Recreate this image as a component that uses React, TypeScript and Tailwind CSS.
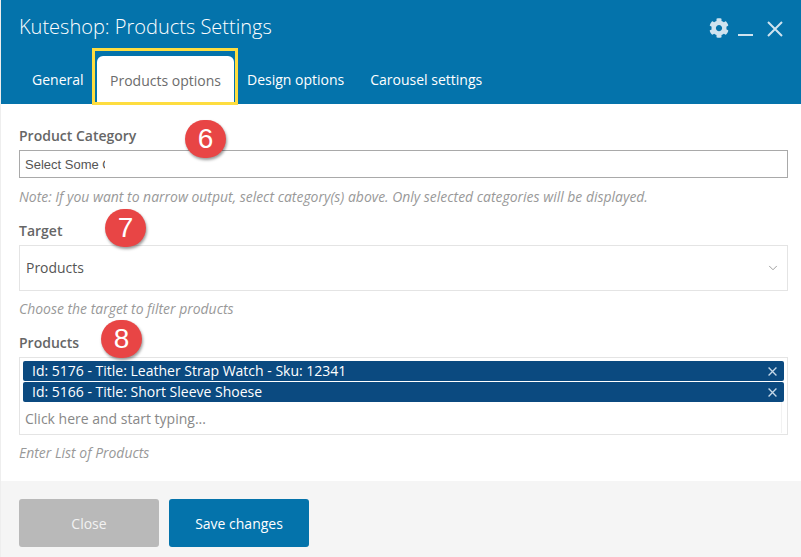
import { ChevronDown } from "lucide-react";
import { FaCog } from "react-icons/fa";

const font = "font-['Open_Sans',sans-serif]";

function Cross({ size, width, className }: { size: number; width: number; className: string }) {
  return (
    <svg width={size} height={size} viewBox="0 0 16 16" className={className} stroke="currentColor" strokeWidth={width} fill="none">
      <path d="M1 1 15 15M15 1 1 15" />
    </svg>
  );
}

function Badge({ n, className }: { n: number; className: string }) {
  return (
    <span
      className={`absolute flex h-[38px] w-[41px] items-center justify-center rounded-full bg-[#e84545] font-['Liberation_Sans',sans-serif] text-[28px] text-white shadow-[1px_2px_3px_rgba(0,0,0,0.4)] ${className}`}
    >
      {n}
    </span>
  );
}

function Tag({ text }: { text: string }) {
  return (
    <div className="flex h-[20px] items-center justify-between rounded-[2px] bg-[#0b4a80] pl-[9px] pr-[7px] text-[14px] leading-[18px] text-white">
      <span className="-mt-[1px]">{text}</span>
      <Cross size={9} width={2.4} className="text-[#c5d8e8]" />
    </div>
  );
}

export default function App() {
  return (
    <div className={`flex h-[557px] w-[801px] flex-col overflow-hidden border-l border-[#eeeeee] bg-white ${font}`}>
      <header className="h-[104px] shrink-0 bg-[#0473ab] text-white">
        <div className="flex h-[48px] items-start justify-between pl-[18px] pr-[18px] pt-[12px]">
          <h1 className="text-[20px] font-light leading-[30px]">Kuteshop: Products Settings</h1>
          <div className="flex items-start gap-[9px] pt-[6px] text-[#cfe3ef]">
            <FaCog size={20} />
            <span className="mt-[16px] h-[2px] w-[15px] bg-[#cfe3ef]" />
            <Cross size={16} width={2} className="ml-[5px] mt-[3px]" />
          </div>
        </div>
        <nav className="flex h-[56px] items-end pl-[18px] text-[14px]">
          <span className="w-[78px] pb-[14px] pl-[13px]">General</span>
          <div className="relative">
            <span className="block h-[48px] w-[137px] rounded-t-[6px] bg-white pt-[14px] text-center text-[#6c6c6c]">
              Products options
            </span>
            <span className="absolute -bottom-[1px] -left-[5px] -top-[8px] -right-[4px] border-[3px] border-[#fedd3f]" />
          </div>
          <span className="pb-[14px] pl-[13px]">Design options</span>
          <span className="pb-[14px] pl-[26px]">Carousel settings</span>
        </nav>
      </header>

      <main className="relative flex-1 pl-[18px] pr-[13px] pt-[22px] text-[13.95px]">
        <label className="block text-[14px] font-semibold leading-[19px] text-[#666666]">Product Category</label>
        <div className="mt-[5px] flex h-[28px] items-center border border-[#a9a9a9] pl-[5px] font-['Liberation_Sans',sans-serif] text-[13px] text-[#555555]">
          <span className="w-[80px] overflow-hidden whitespace-nowrap pt-[1px]">Select Some Options</span>
        </div>
        <p className="mt-[9px] italic leading-[19px] text-[#999999]">
          Note: If you want to narrow output, select category(s) above. Only selected categories will be displayed.
        </p>

        <label className="mt-[15px] block text-[14px] font-semibold leading-[19px] text-[#666666]">Target</label>
        <div className="mt-[5px] flex h-[46px] items-center justify-between border border-[#e4e4e4] pl-[6px] pr-[7px] text-[#555555]">
          <span>Products</span>
          <ChevronDown size={14} strokeWidth={1.2} className="text-[#777777]" />
        </div>
        <p className="mt-[8px] italic leading-[19px] text-[#999999]">Choose the target to filter products</p>

        <label className="mt-[15px] block text-[14px] font-semibold leading-[19px] text-[#666666]">Products</label>
        <div className="mt-[5px] h-[78px] border border-[#e4e4e4] px-[3px] pt-[3px]">
          <div className="flex flex-col gap-[1px]">
            <Tag text="Id: 5176 - Title: Leather Strap Watch - Sku: 12341" />
            <Tag text="Id: 5166 - Title: Short Sleeve Shoese" />
          </div>
          <div className="mr-[2px] flex h-[31px] items-center border-r border-[#f2f2f2] pl-[2px] text-[14px] text-[#888888]">
            <span className="mt-[1px]">Click here and start typing...</span>
          </div>
        </div>
        <p className="mt-[8px] italic leading-[19px] text-[#999999]">Enter List of Products</p>

        <Badge n={6} className="left-[184px] top-[16px]" />
        <Badge n={7} className="left-[104px] top-[105px]" />
        <Badge n={8} className="left-[100px] top-[216px]" />
      </main>

      <footer className="flex h-[76px] shrink-0 gap-[10px] bg-[#f5f5f5] pl-[18px] pt-[18px] text-[14px]">
        <button type="button" className="h-[48px] w-[140px] rounded-[3px] bg-[#b9b9b9] text-[#f2f2f2]">
          Close
        </button>
        <button type="button" className="h-[48px] w-[140px] rounded-[3px] bg-[#0473ab] text-white">
          Save changes
        </button>
      </footer>
    </div>
  );
}
